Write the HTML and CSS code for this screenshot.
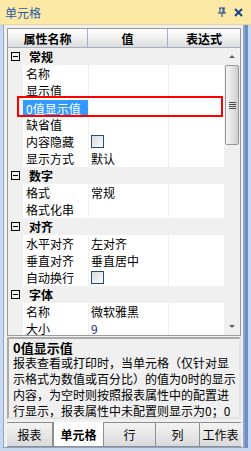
FILE: index.html
```html
<!DOCTYPE html>
<html lang="zh-CN">
<head>
  <meta charset="UTF-8" />
  <title>单元格</title>
  <link rel="stylesheet" href="styles.css">
</head>
<body>
  <div class="panel">
    <div class="titlebar">
      <span class="title">单元格</span>
      <span class="tools">
        <svg width="8" height="10" viewBox="0 0 8 10"><path d="M1 1h6M2 1v5M6 1v5M5 1v5M0 6h8M4 6v4" stroke="#15428b" stroke-width="1" fill="none"/></svg>
        <svg width="9" height="9" viewBox="0 0 9 9"><path d="M1 1l7 7M8 1l-7 7" stroke="#15428b" stroke-width="2" fill="none"/></svg>
      </span>
    </div>

    <div class="content">
      <div class="grid">
        <div class="head">
          <div class="hcell">属性名称</div>
          <div class="hcell">值</div>
          <div class="hcell">表达式</div>
        </div>
        <div class="gridbody">
          <div class="rows">
            <div class="group"><span class="toggle"></span>常规</div>
            <div class="row"><span></span><span class="name">名称</span><span class="val"></span><span class="exp"></span></div>
            <div class="row"><span></span><span class="name">显示值</span><span class="val"></span><span class="exp"></span></div>
            <div class="row selected"><span></span><span class="name">0值显示值</span><span class="val"></span><span class="exp"></span></div>
            <div class="row"><span></span><span class="name">缺省值</span><span class="val"></span><span class="exp"></span></div>
            <div class="row"><span></span><span class="name">内容隐藏</span><span class="val"><i class="check"></i></span><span class="exp"></span></div>
            <div class="row"><span></span><span class="name">显示方式</span><span class="val">默认</span><span class="exp"></span></div>
            <div class="group"><span class="toggle"></span>数字</div>
            <div class="row"><span></span><span class="name">格式</span><span class="val">常规</span><span class="exp"></span></div>
            <div class="row"><span></span><span class="name">格式化串</span><span class="val"></span><span class="exp"></span></div>
            <div class="group"><span class="toggle"></span>对齐</div>
            <div class="row"><span></span><span class="name">水平对齐</span><span class="val">左对齐</span><span class="exp"></span></div>
            <div class="row"><span></span><span class="name">垂直对齐</span><span class="val">垂直居中</span><span class="exp"></span></div>
            <div class="row"><span></span><span class="name">自动换行</span><span class="val"><i class="check"></i></span><span class="exp"></span></div>
            <div class="group"><span class="toggle"></span>字体</div>
            <div class="row"><span></span><span class="name">名称</span><span class="val">微软雅黑</span><span class="exp"></span></div>
            <div class="row"><span></span><span class="name">大小</span><span class="val num">9</span><span class="exp"></span></div>
          </div>
          <div class="scrollbar">
            <div class="arrow up"></div>
            <div class="thumb"><span class="grip"></span></div>
            <div class="track"></div>
            <div class="arrow down"></div>
          </div>
        </div>
      </div>

      <div class="desc">
        <div class="desc-title">0值显示值</div>
        <p>报表查看或打印时，当单元格（仅针对显示格式为数值或百分比）的值为0时的显示内容，为空时则按照报表属性中的配置进行显示，报表属性中未配置则显示为0；0</p>
      </div>

      <div class="tabs">
        <div class="tab t1">报表</div>
        <div class="tab t2 active">单元格</div>
        <div class="tab t3">行</div>
        <div class="tab t4">列</div>
        <div class="tab t5">工作表</div>
      </div>
    </div>
  </div>
</body>
</html>
```

FILE: styles.css
```css
body {
  margin: 0;
  width: 251px;
  height: 451px;
  overflow: hidden;
  font-family: "Noto Sans CJK SC", "Liberation Sans", sans-serif;
  font-size: 12px;
  color: #000;
}

.panel {
  height: 451px;
  display: flex;
  flex-direction: column;
  background: #c7d7ee;
}

/* Title bar */
.titlebar {
  height: 24px;
  flex: none;
  display: flex;
  align-items: center;
  justify-content: space-between;
  padding: 0 8px 0 5px;
  background: #fde9a6;
  border-bottom: 1px solid #e8d498;
}

.title {
  color: #2a5bab;
  font-size: 12px;
}

.tools {
  display: flex;
  gap: 8px;
  align-items: center;
}

/* Body */
.content {
  flex: 1;
  display: flex;
  flex-direction: column;
  margin: 0 6px 4px 3px;
  padding: 3px 2px 0 3px;
  background: #f0f0f0;
  border-left: 1px solid #8ea5c8;
  border-right: 2px solid #8ea5c8;
  border-bottom: 1px solid #8ea5c8;
  box-shadow: 3px 0 0 #6f8fc4;
}

.grid {
  height: 308px;
  flex: none;
  display: flex;
  flex-direction: column;
  background: #fff;
  border: 1px solid #9a9a9a;
  box-sizing: border-box;
}

.head {
  height: 18px;
  flex: none;
  display: grid;
  grid-template-columns: 80px 80px 1fr;
  background: linear-gradient(#ffffff, #f3f3f3 40%, #dcdcdc);
  border-bottom: 1px solid #a5b0c2;
}

.hcell {
  display: flex;
  align-items: center;
  justify-content: center;
  font-weight: bold;
  border-right: 1px solid #a5b0c2;
}

.hcell:last-child {
  border-right: none;
}

.gridbody {
  flex: 1;
  display: flex;
  overflow: hidden;
}

.rows {
  flex: 1;
}

.group {
  height: 17px;
  display: flex;
  align-items: center;
  background: #f0f0f0;
  font-weight: bold;
}

.toggle {
  width: 7px;
  height: 7px;
  margin: 0 9px 0 3px;
  border: 1px solid #000;
  background: linear-gradient(#000, #000) center / 5px 1px no-repeat;
}

.row {
  position: relative;
  height: 17px;
  box-sizing: border-box;
  display: grid;
  grid-template-columns: 15px 66px 80px 1fr;
  background: #fff;
}

.row > span {
  display: flex;
  align-items: center;
  border-bottom: 1px solid #f0f0f0;
}

.row > span:first-child {
  background: #f0f0f0;
}

.name {
  padding-left: 3px;
  border-right: 1px solid #f0f0f0;
}

.val {
  padding-left: 2px;
  border-right: 1px solid #f0f0f0;
}

.num {
  color: #1c2a7a;
}

.selected {
  z-index: 1;
}

.selected .name {
  background: #3399ff;
  color: #fff;
  margin: 1px 0 0;
  border-bottom: none;
}

.selected::after {
  content: "";
  position: absolute;
  left: 9px;
  right: 1px;
  top: -3px;
  bottom: -1px;
  border: 2px solid #ff0000;
}

.check {
  width: 11px;
  height: 11px;
  border: 1px solid #1f4f7a;
  background: linear-gradient(135deg, #dcdcdc, #fafafa);
}

/* Scrollbar */
.scrollbar {
  width: 16px;
  flex: none;
  display: flex;
  flex-direction: column;
  background: #f0f0f0;
}

.arrow {
  height: 17px;
  position: relative;
}

.arrow::after {
  content: "";
  position: absolute;
  left: 5px;
  top: 7px;
  border-left: 3px solid transparent;
  border-right: 3px solid transparent;
}

.up::after {
  border-bottom: 3px solid #606060;
}

.down::after {
  border-top: 3px solid #606060;
}

.thumb {
  height: 80px;
  margin: 0 1px;
  box-sizing: border-box;
  border: 1px solid #979797;
  border-radius: 2px;
  background: linear-gradient(90deg, #f4f4f4, #e0e0e0 60%, #cfcfcf);
  display: flex;
  align-items: center;
  justify-content: center;
}

.grip {
  width: 7px;
  height: 7px;
  background: repeating-linear-gradient(#4a4a4a 0 1px, transparent 1px 2px);
}

.track {
  flex: 1;
}

/* Description */
.desc {
  height: 82px;
  box-sizing: border-box;
  flex: none;
  margin-top: 1px;
  padding: 1px 1px 0 4px;
  border: 2px solid #a9a9a9;
  border-right-color: #e4e4e4;
  border-bottom-color: #e4e4e4;
  background: #f0f0f0;
}

.desc-title {
  font-weight: bold;
  font-size: 13px;
  line-height: 15px;
}

.desc p {
  margin: 0;
  line-height: 16px;
}

/* Tabs */
.tabs {
  height: 24px;
  flex: none;
  display: flex;
  margin-top: 3px;
  border-top: 1px solid #8e8e8e;
}

.tab {
  display: flex;
  align-items: center;
  justify-content: center;
  background: linear-gradient(#f3f3f3, #dadada);
  border-right: 1px solid #8e8e8e;
  border-bottom: 1px solid #8e8e8e;
}

.tab.active {
  background: #fff;
  font-weight: bold;
  margin-top: -1px;
  border-left: 1px solid #8e8e8e;
}

.t1 { width: 45px; }
.t2 { width: 49px; }
.t3 { width: 51px; }
.t4 { width: 43px; }
.t5 { flex: 1; border-right: none; }
```
